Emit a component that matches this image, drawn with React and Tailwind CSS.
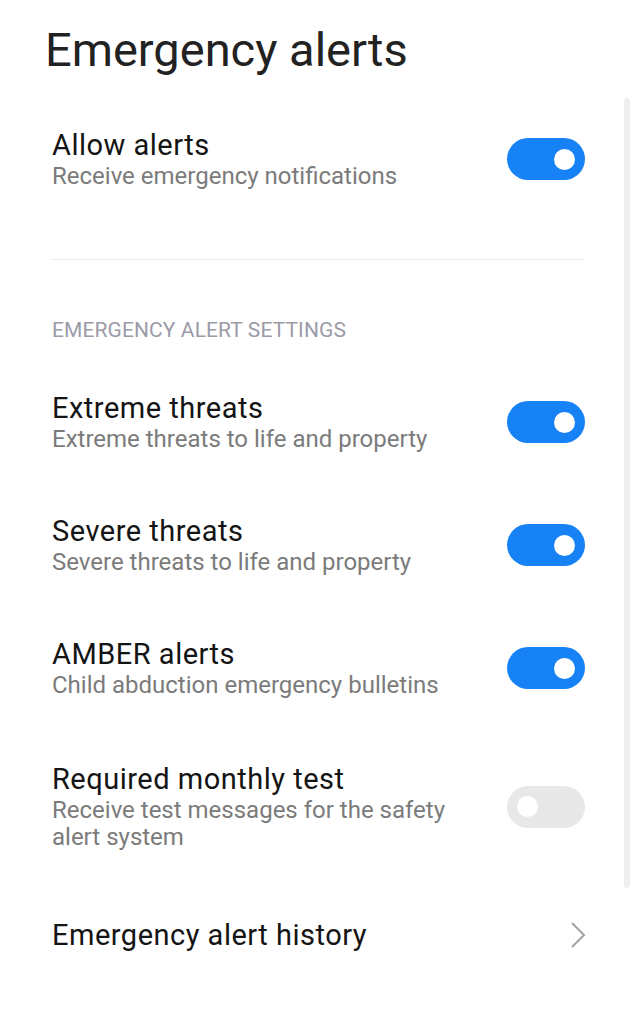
import React from "react";

// toggle switch like the MIUI one
const Toggle = ({ on }) => (
  <div
    className={
      "relative flex h-[42px] w-[78px] shrink-0 items-center rounded-full px-[10px] " +
      (on ? "justify-end bg-[#1682f5]" : "justify-start bg-[#e8e8e8]")
    }
  >
    <div className="h-[21px] w-[21px] rounded-full bg-white" />
  </div>
);

const Row = ({ title, sub, on, extra = "pt-[31px] pb-[30px]" }) => (
  <div className={"flex items-center justify-between gap-6 " + extra}>
    <div className="min-w-0 flex-1">
      <div className="text-[29px] leading-[34px] tracking-[0.5px] text-[#141414]">{title}</div>
      {sub && (
        <div className="mt-[1px] max-w-[400px] text-[24px] leading-[27px] text-[#7b7b7b]">
          {sub}
        </div>
      )}
    </div>
    <Toggle on={on} />
  </div>
);

const settings = [
  { title: "Extreme threats", sub: "Extreme threats to life and property", on: true },
  { title: "Severe threats", sub: "Severe threats to life and property", on: true },
  { title: "AMBER alerts", sub: "Child abduction emergency bulletins", on: true },
  {
    title: "Required monthly test",
    sub: "Receive test messages for the safety alert system",
    on: false,
    extra: "pt-[33px] pb-[32px]",
  },
];

export default function App() {
  return (
    <div
      className="relative min-h-[1024px] w-full bg-white"
      style={{ fontFamily: "Roboto, 'Noto Sans', sans-serif" }}
    >
      {/* scroll indicator */}
      <div className="absolute right-[6px] top-[98px] h-[790px] w-[6px] rounded-full bg-[#efefef]" />

      <h1 className="pl-[45px] pt-[22px] text-[47px] font-normal leading-[56px] text-[#222222]">
        Emergency alerts
      </h1>

      <div className="pl-[52px] pr-[51px] pt-[19px]">
        <Row title="Allow alerts" sub="Receive emergency notifications" on={true} />

        <div className="mt-[39px] h-px bg-[#ececec]" />

        <div className="mt-[56px] text-[21px] leading-[28px] tracking-[0.1px] text-[#9b9ba8]">
          EMERGENCY ALERT SETTINGS
        </div>

        <div className="pt-[16px]">
          {settings.map((s) => (
            <Row key={s.title} title={s.title} sub={s.sub} on={s.on} extra={s.extra} />
          ))}
        </div>

        <div className="flex items-center justify-between pb-[30px] pt-[35px]">
          <div className="text-[29px] leading-[34px] tracking-[0.5px] text-[#141414]">
            Emergency alert history
          </div>
          <svg width="16" height="26" viewBox="0 0 16 26" className="mr-[-1px]">
            <path d="M2 1 L14 13 L2 25" fill="none" stroke="#a3a3a3" strokeWidth="2" />
          </svg>
        </div>
      </div>
    </div>
  );
}
